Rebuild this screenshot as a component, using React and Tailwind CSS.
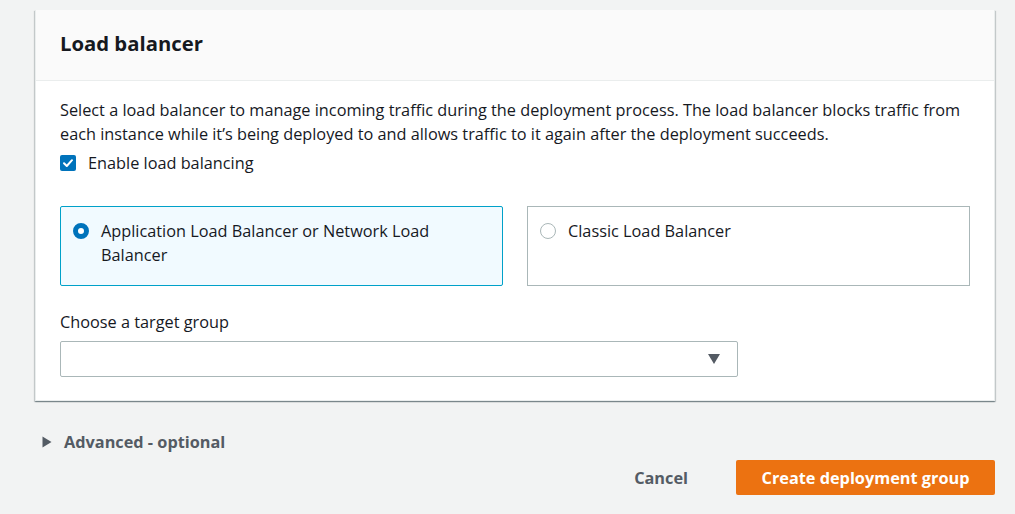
export default function App() {
  return (
    <div className="w-[1015px] h-[514px] overflow-hidden bg-[#f2f3f3] text-[16.3px] text-[#16191f]" style={{ fontFamily: '"Open Sans", Arial, sans-serif' }}>
      <div className="pt-[10px] pl-[35px] pr-[20px]">
        <div className="bg-white border border-[#eaeded] border-t-0 shadow-[0_1px_1px_0_rgba(0,28,36,0.3),1px_1px_1px_0_rgba(0,28,36,0.15),-1px_1px_1px_0_rgba(0,28,36,0.15)]">
          <div className="h-[71px] bg-[#fafafa] border-b border-[#eaeded] flex items-center px-[24px] pb-[4px]">
            <h2 className="text-[20.3px] font-bold leading-[24px] text-[#16191f]">Load balancer</h2>
          </div>
          <div className="px-[24px] pt-[18px] pb-[23px]">
            <p className="leading-[23.5px] text-[#16191f]">
              Select a load balancer to manage incoming traffic during the deployment process. The load balancer blocks traffic from each instance while it’s being deployed to and allows traffic to it again after the deployment succeeds.
            </p>
            <label className="flex items-center gap-[12px] mt-[6px] h-[22px] leading-[22px]">
              <span className="w-[16px] h-[16px] rounded-[2px] bg-[#0073bb] flex items-center justify-center">
                <svg width="12" height="12" viewBox="0 0 12 12" fill="none">
                  <path d="M2 6.2 L4.8 9 L10 3.2" stroke="white" strokeWidth="2" strokeLinecap="round" strokeLinejoin="round" />
                </svg>
              </span>
              <span className="text-[#16191f]">Enable load balancing</span>
            </label>
            <div className="grid grid-cols-2 gap-[24px] mt-[32px]">
              <div className="h-[80px] border border-[#00a1c9] rounded-[2px] bg-[#f1faff] flex items-start gap-[12px] px-[12px] pt-[12px]">
                <span className="mt-[4px] w-[16px] h-[16px] shrink-0 rounded-full border-[5px] border-[#0073bb] bg-white"></span>
                <span className="leading-[24px] text-[#16191f]">Application Load Balancer or Network Load Balancer</span>
              </div>
              <div className="h-[80px] border border-[#aab7b8] flex items-start gap-[12px] px-[12px] pt-[12px]">
                <span className="mt-[4px] w-[16px] h-[16px] shrink-0 rounded-full border border-[#aab7b8] bg-white"></span>
                <span className="leading-[24px] text-[#16191f]">Classic Load Balancer</span>
              </div>
            </div>
            <div className="mt-[24px] leading-[24px] text-[#16191f]">Choose a target group</div>
            <div className="mt-[7px] w-[678px] h-[36px] border border-[#aab7b8] rounded-[2px] bg-white flex items-center justify-end pr-[16px]">
              <svg width="14" height="12" viewBox="0 0 14 12">
                <path d="M1 1 H13 L7 11 Z" fill="#545b64" />
              </svg>
            </div>
          </div>
        </div>
        <div className="mt-[29px] pl-[7px] flex items-center gap-[12px] h-[24px]">
          <svg width="10" height="12" viewBox="0 0 10 12">
            <path d="M0.5 0.5 L9.5 6 L0.5 11.5 Z" fill="#545b64" />
          </svg>
          <span className="font-bold text-[#545b64]">Advanced - optional</span>
        </div>
        <div className="mt-[6px] flex items-center justify-end gap-[48px]">
          <button className="font-bold text-[#545b64] leading-[24px]">Cancel</button>
          <button className="h-[35px] w-[259px] bg-[#ec7211] rounded-[2px] font-bold text-white leading-[24px]">Create deployment group</button>
        </div>
      </div>
    </div>
  )
}
